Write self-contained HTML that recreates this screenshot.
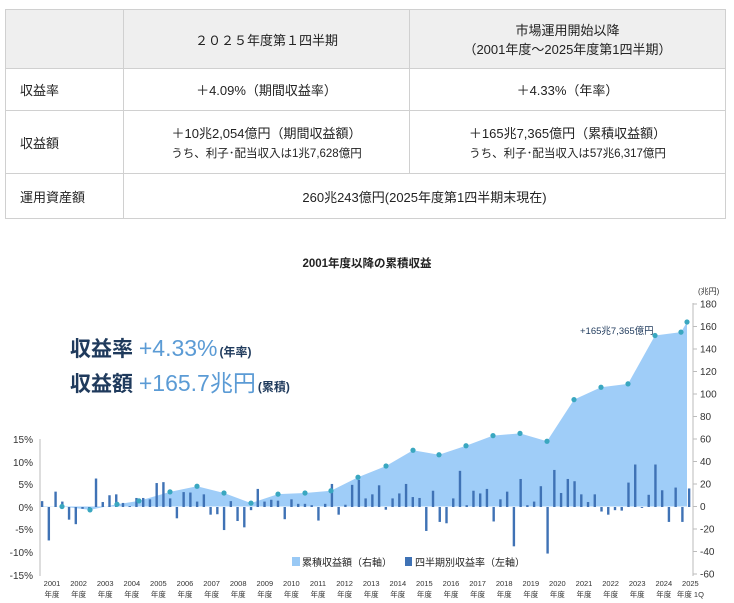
<!DOCTYPE html>
<html><head><meta charset="utf-8"><style>
body{margin:0;width:734px;height:603px;background:#fff;font-family:"Liberation Sans","Noto Sans CJK JP",sans-serif;color:#222;overflow:hidden;position:relative}
table{position:absolute;left:5px;top:9px;width:721px;border-collapse:collapse;font-size:13px}
td{border:1px solid #d0d0d0;text-align:center;padding:0}
td.l{text-align:left;padding-left:14px}
.h td{background:#efefef}
.s{font-size:11.5px;display:block;margin-top:3px}
</style></head><body>
<table>
<tr class="h" style="height:59px"><td style="width:117px"></td><td style="width:285px">２０２５年度第１四半期</td><td>市場運用開始以降<br>（2001年度～2025年度第1四半期）</td></tr>
<tr style="height:42px"><td class="l">収益率</td><td>＋4.09%（期間収益率）</td><td>＋4.33%（年率）</td></tr>
<tr style="height:63px"><td class="l">収益額</td><td>＋10兆2,054億円（期間収益額）<span class="s">うち、利子･配当収入は1兆7,628億円</span></td><td>＋165兆7,365億円（累積収益額）<span class="s">うち、利子･配当収入は57兆6,317億円</span></td></tr>
<tr style="height:45px"><td class="l">運用資産額</td><td colspan="2">260兆243億円(2025年度第1四半期末現在)</td></tr>
</table>
<svg id="c" width="734" height="603" style="position:absolute;left:0;top:0" font-family="Liberation Sans, Noto Sans CJK JP, sans-serif">
<text x="367" y="267" text-anchor="middle" font-size="11.5" font-weight="bold" fill="#222">2001年度以降の累積収益</text>
<g id="area"></g><g id="bars"></g><g id="dots"></g>
<line x1="40" y1="439" x2="40" y2="576" stroke="#bbb"/>
<line x1="693" y1="303" x2="693" y2="576" stroke="#bbb"/>
<g font-size="10" fill="#333" text-anchor="end">
<text x="33" y="443">15%</text><text x="33" y="466">10%</text><text x="33" y="488">5%</text><text x="33" y="511">0%</text><text x="33" y="533">-5%</text><text x="33" y="556">-10%</text><text x="33" y="579">-15%</text>
</g>
<g id="ry" font-size="10" fill="#333"></g>
<text x="698" y="294" font-size="8" fill="#333">(兆円)</text>
<text x="580" y="334" font-size="9.5" fill="#1f3a5c">+165兆7,365億円</text>
<text x="70" y="356" font-size="21" font-weight="bold" fill="#1f3a5c">収益率 <tspan fill="#5b9bd5" font-weight="normal" font-size="23">+4.33%</tspan><tspan font-size="12" dx="2">(年率)</tspan></text>
<text x="70" y="391" font-size="21" font-weight="bold" fill="#1f3a5c">収益額 <tspan fill="#5b9bd5" font-weight="normal" font-size="23">+165.7兆円</tspan><tspan font-size="12" dx="2">(累積)</tspan></text>
<rect x="292" y="557" width="8" height="9" fill="#99c9f5"/><text x="302" y="566" font-size="10" fill="#222">累積収益額（右軸）</text>
<rect x="405" y="557" width="7" height="9" fill="#3f72b5"/><text x="415" y="566" font-size="10" fill="#222">四半期別収益率（左軸）</text>
<g id="yr" font-size="7.5" fill="#333" text-anchor="middle"></g>
</svg>
<script>
var ns="http://www.w3.org/2000/svg";
function el(p,t,a,txt){var e=document.createElementNS(ns,t);for(var k in a)e.setAttribute(k,a[k]);if(txt)e.textContent=txt;document.getElementById(p).appendChild(e);return e;}
var d=[[62,0],[90,-3],[117,2],[139,5],[170,13],[197,18],[224,12],[251,3],[278,11],[305,12],[331,14],[358,26],[386,36],[413,50],[439,46],[466,54],[493,63],[520,65],[547,58],[574,95],[601,106],[628,109],[655,152],[681,155],[687,164]];
function Y(v){return 506.5-v*1.125;}
var p="M42,506.5 L42,506 ";d.forEach(function(q){p+="L"+q[0]+","+Y(q[1])+" ";});p+="L687,506.5 Z";
el("area","path",{d:p,fill:"#9fcdf8"});
d.forEach(function(q){el("dots","circle",{cx:q[0],cy:Y(q[1]),r:2.6,fill:"#3aa7c0"});});
var b=[1.3,-7.4,3.4,1.2,-2.8,-3.8,-0.4,-0.5,6.3,1.1,2.6,2.8,0.9,0.2,2,2,1.7,5.3,5.5,1.9,-2.5,3.3,3.2,1.2,2.8,-1.7,-1.6,-5.1,1.3,-3.1,-4.5,-0.7,4,1.2,1.6,1.4,-2.7,1.7,0.7,0.7,0.4,-3,0.7,5.1,-1.7,0.5,4.9,6,1.9,2.8,4.8,-0.6,1.9,3,5.1,2.2,2,-5.3,3.6,-3.3,-3.6,1.9,8,0.4,3.6,3,4,-3.2,1.7,3.4,-8.7,6.2,0.4,1.2,4.6,-10.3,8.2,3.1,6.2,5.7,2.8,1.1,2.8,-1,-1.7,-0.7,-0.8,5.4,9.4,-0.2,2.7,9.4,3.7,-3.3,4.3,-3.3,4.1];
b.forEach(function(v,i){var x=42.1+i*6.74,h=Math.abs(v)*4.52;el("bars","rect",{x:x-1.2,y:v>0?507-h:507,width:2.4,height:h,fill:"#3f72b5"});});
for(var v=180;v>=-60;v-=20){var y=Y(v);el("ry","line",{x1:693,y1:y,x2:697,y2:y,stroke:"#bbb"});el("ry","text",{x:700,y:y+3.5},""+v);}
for(var i=0;i<25;i++){var x=52+i*26.6;el("yr","text",{x:x,y:586},""+(2001+i));el("yr","text",{x:x,y:597},i==24?"年度 1Q":"年度");}
</script>
</body></html>
